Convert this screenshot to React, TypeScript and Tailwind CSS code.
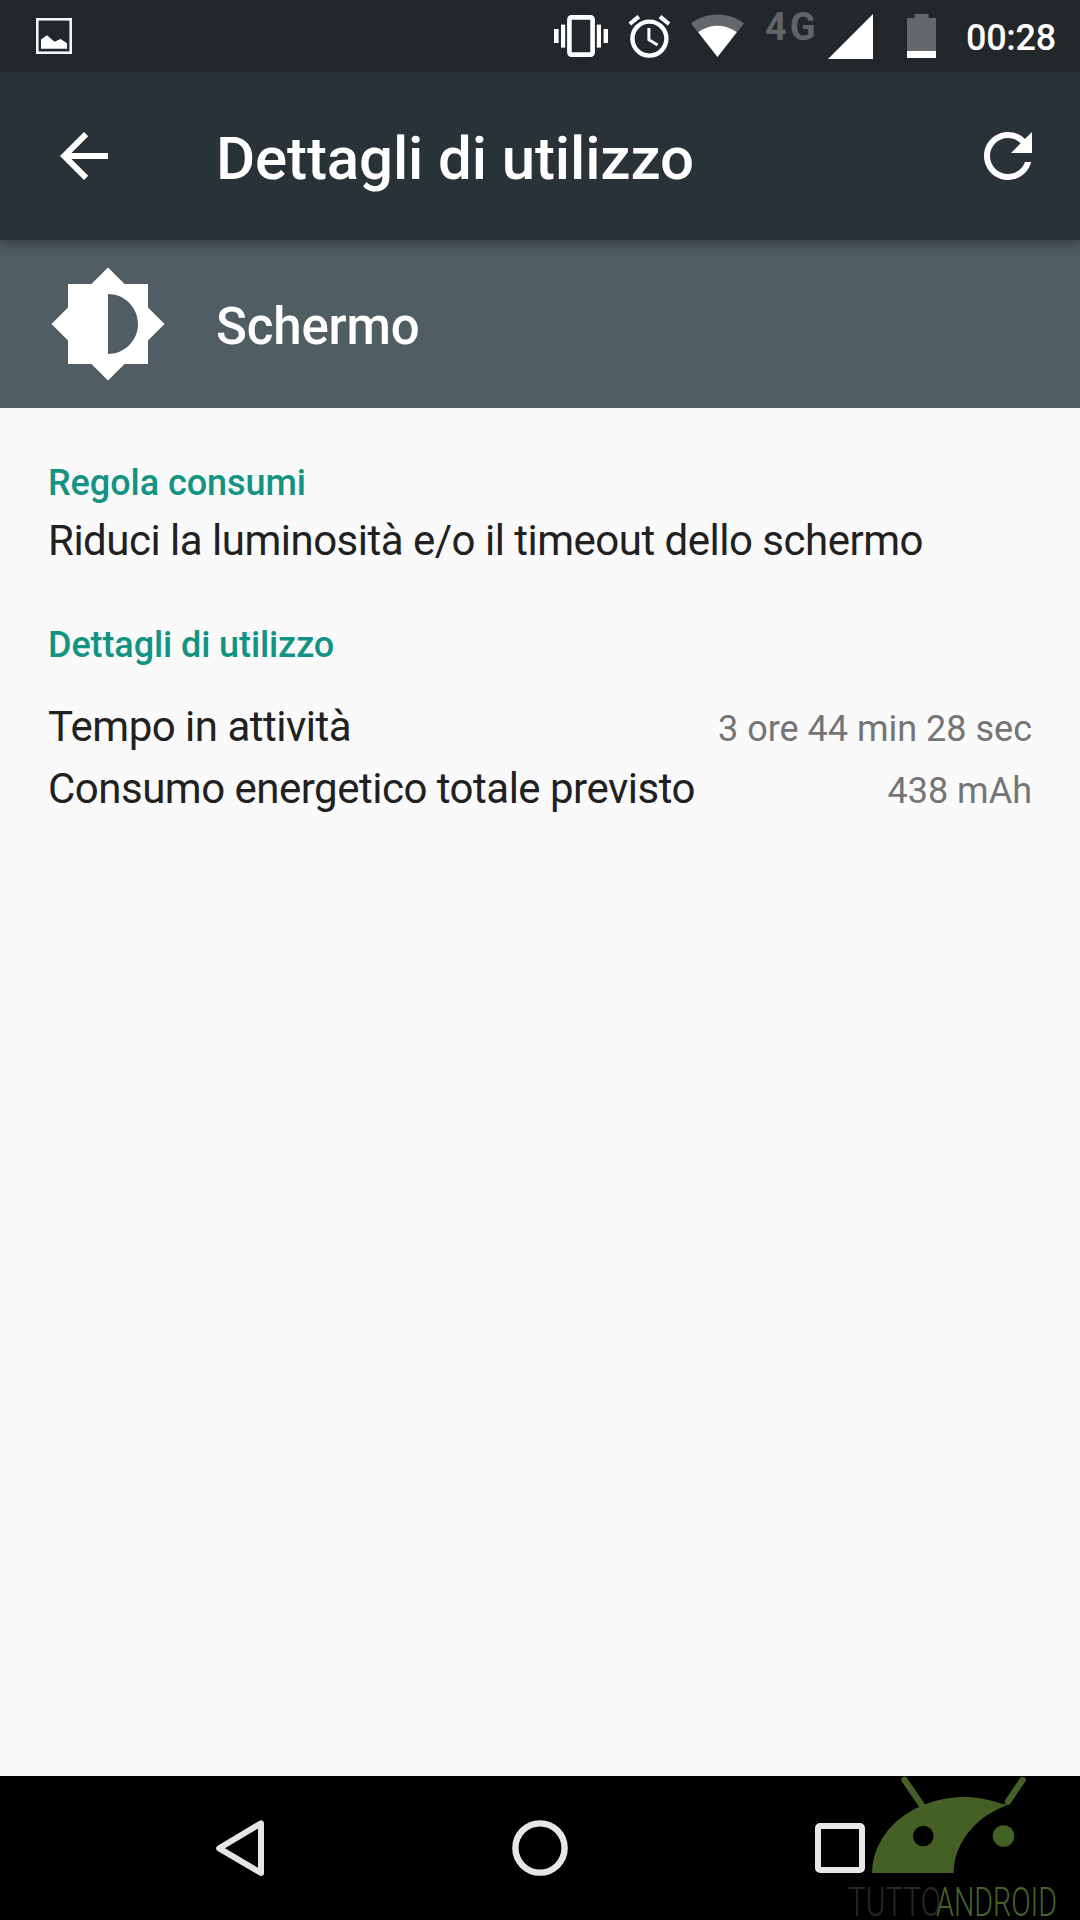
import React from "react";

function StatusBar() {
  return (
    <div className="relative z-20 flex h-[72px] items-start bg-[#22272b] pl-9 text-white">
      <svg className="mt-[18px] h-9 w-9 shrink-0" viewBox="0 0 36 36">
        <rect x="1.3" y="1.3" width="33.4" height="33.4" fill="none" stroke="#f4f6f7" strokeWidth="2.6" />
        <path d="M5 21.5L11 17.3L18.5 23.8L24.5 21L31 25.3V30.7H5Z" fill="white" />
      </svg>
      <svg className="ml-[482px] mt-[15px] h-[42px] w-[54px] shrink-0" viewBox="0 0 54 42" fill="white">
        <rect x="0" y="14" width="4.6" height="14" />
        <rect x="7" y="9.6" width="4.2" height="23" />
        <rect x="42.8" y="9.6" width="4.2" height="23" />
        <rect x="49.6" y="14" width="4.4" height="14" />
        <rect x="15.4" y="2.4" width="23.2" height="37.2" rx="2" fill="none" stroke="white" strokeWidth="4.6" />
      </svg>
      <svg className="ml-5 mt-[15px] h-[43px] w-[43px] shrink-0" viewBox="0 0 43 43" fill="none" stroke="white">
        <circle cx="21.4" cy="23.6" r="17" strokeWidth="4.4" />
        <path d="M1.8 9L10.8 1.6M32 1.6L41 9" strokeWidth="4.2" />
        <path d="M20.9 13V24.7L29.6 30" strokeWidth="3" />
      </svg>
      <svg className="ml-5 mt-[14px] h-[43px] w-[53px] shrink-0" viewBox="0 0 53 43">
        <path d="M26.5 43L0 9.6C7 4 15.5 0.5 26.5 0.5S46 4 53 9.6Z" fill="#65686a" />
        <path d="M26.5 43L7.3 18.3C13 14.2 19 11.8 26.5 11.8S40 14.2 45.7 18.3Z" fill="white" />
      </svg>
      <span className="ml-[21px] mt-[6px] w-[51px] shrink-0 whitespace-nowrap text-[38px] font-bold leading-[42px] tracking-[3px] text-[#606467]">4G</span>
      <svg className="ml-3 mt-[14px] h-[45px] w-[45px] shrink-0" viewBox="0 0 45 45">
        <path d="M0 45L45 0V45Z" fill="white" />
      </svg>
      <svg className="ml-[34px] mt-[14px] h-[44px] w-[29px] shrink-0" viewBox="0 0 29 44">
        <path d="M7.5 0H21.5V4H29V37H0V4H7.5Z" fill="#65686a" />
        <path d="M0 37H29V44H0Z" fill="white" />
      </svg>
      <span className="ml-[30px] mt-[17px] whitespace-nowrap text-[36px] font-medium leading-[42px] tracking-[-0.3px]">00:28</span>
    </div>
  );
}

function Toolbar() {
  return (
    <header className="relative z-10 flex h-[168px] items-center bg-[#283237] pl-12 pr-9 text-white shadow-[0_3px_14px_rgba(0,0,0,0.4)]">
      <svg className="h-[72px] w-[72px]" viewBox="0 0 24 24" fill="white">
        <path d="M20 11H7.8l5.6-5.6L12 4l-8 8 8 8 1.4-1.4L7.8 13H20v-2z" />
      </svg>
      <h1 className="ml-24 pt-[5px] text-[60px] font-medium leading-[70px] tracking-[-0.12px]">Dettagli di utilizzo</h1>
      <svg className="ml-auto h-[72px] w-[72px]" viewBox="0 0 24 24" fill="white">
        <path d="M17.65 6.35C16.2 4.9 14.21 4 12 4c-4.42 0-7.99 3.58-7.99 8s3.57 8 7.99 8c3.73 0 6.84-2.55 7.73-6h-2.08c-.82 2.33-3.04 4-5.65 4-3.31 0-6-2.69-6-6s2.69-6 6-6c1.66 0 3.14.69 4.22 1.78L13 11h7V4l-2.35 2.35z" />
      </svg>
    </header>
  );
}

function AppHeader() {
  return (
    <div className="flex h-[168px] items-center bg-[#505d63] pl-12 text-white">
      <svg className="h-[120px] w-[120px]" viewBox="0 0 24 24" fill="white">
        <path d="M20 15.31L23.31 12L20 8.69V4h-4.69L12 .69L8.69 4H4v4.69L.69 12L4 15.31V20h4.69L12 23.31L15.31 20H20v-4.69zM12 18V6c3.31 0 6 2.69 6 6s-2.69 6-6 6z" />
      </svg>
      <h2 className="ml-12 pt-[6px] text-[51px] font-medium leading-[60px] tracking-[-0.15px]">Schermo</h2>
    </div>
  );
}

const details = [
  { label: "Tempo in attività", value: "3 ore 44 min 28 sec" },
  { label: "Consumo energetico totale previsto", value: "438 mAh" },
];

function Watermark() {
  return (
    <svg className="absolute bottom-0 right-0 h-[144px] w-[240px]" viewBox="840 1776 240 144">
      <defs>
        <linearGradient id="head" x1="0" y1="0" x2="1" y2="1">
          <stop offset="0" stopColor="#466128" />
          <stop offset="1" stopColor="#435f22" />
        </linearGradient>
      </defs>
      <g stroke="#436127" strokeWidth="6.4" strokeLinecap="round">
        <path d="M904.5 1780L923 1807" />
        <path d="M1022.5 1780L1008 1801.5" />
      </g>
      <path d="M872 1873A92 76 0 0 1 1002 1803.8L1009 1804.2A92 76 0 0 0 953.5 1873Z" fill="url(#head)" />
      <circle cx="923.3" cy="1836" r="10.3" fill="black" />
      <circle cx="1003.5" cy="1836" r="10.8" fill="#436123" />
      <g fontSize="40.5" fontWeight="300">
        <text x="848" y="1915.5" fill="#29272a" textLength="93" lengthAdjust="spacingAndGlyphs">TUTTO</text>
        <text x="936" y="1915.5" fill="#456328" textLength="121" lengthAdjust="spacingAndGlyphs">ANDROID</text>
      </g>
    </svg>
  );
}

function NavBar() {
  return (
    <nav className="relative flex h-36 items-center bg-black">
      <svg className="ml-[216px] h-[56px] w-[48px]" viewBox="0 0 48 56" fill="none" stroke="#e6e6e6" strokeWidth="6" strokeLinejoin="round">
        <path d="M3.2 28.3L45 3.3V53Z" />
      </svg>
      <svg className="ml-[248px] h-14 w-14" viewBox="0 0 56 56" fill="none" stroke="#e6e6e6" strokeWidth="6.4">
        <circle cx="28" cy="28" r="24.6" />
      </svg>
      <svg className="ml-[247px] h-[50px] w-[50px]" viewBox="0 0 50 50" fill="none" stroke="#e6e6e6" strokeWidth="6">
        <rect x="3" y="3" width="44" height="44" rx="2" />
      </svg>
      <Watermark />
    </nav>
  );
}

export default function App() {
  return (
    <div className="flex h-[1920px] w-[1080px] flex-col overflow-hidden bg-[#fafafa] font-['Roboto',sans-serif]">
      <StatusBar />
      <Toolbar />
      <AppHeader />
      <main className="flex-1 px-12 pt-[54px] text-[#212121]">
        <h3 className="text-[36px] font-medium leading-[42px] tracking-[-0.05px] text-[#129383]">Regola consumi</h3>
        <p className="mt-3 text-[42px] leading-[50px] tracking-[-0.5px]">Riduci la luminosità e/o il timeout dello schermo</p>
        <h3 className="mb-[30px] mt-[58px] text-[36px] font-medium leading-[42px] tracking-[-0.1px] text-[#129383]">Dettagli di utilizzo</h3>
        {details.map((row) => (
          <div key={row.label} className="flex h-[62px] items-baseline justify-between">
            <span className="text-[42px] leading-[62px] tracking-[-0.5px]">{row.label}</span>
            <span className="text-[36px] leading-[42px] text-[#757575]">{row.value}</span>
          </div>
        ))}
      </main>
      <NavBar />
    </div>
  );
}
